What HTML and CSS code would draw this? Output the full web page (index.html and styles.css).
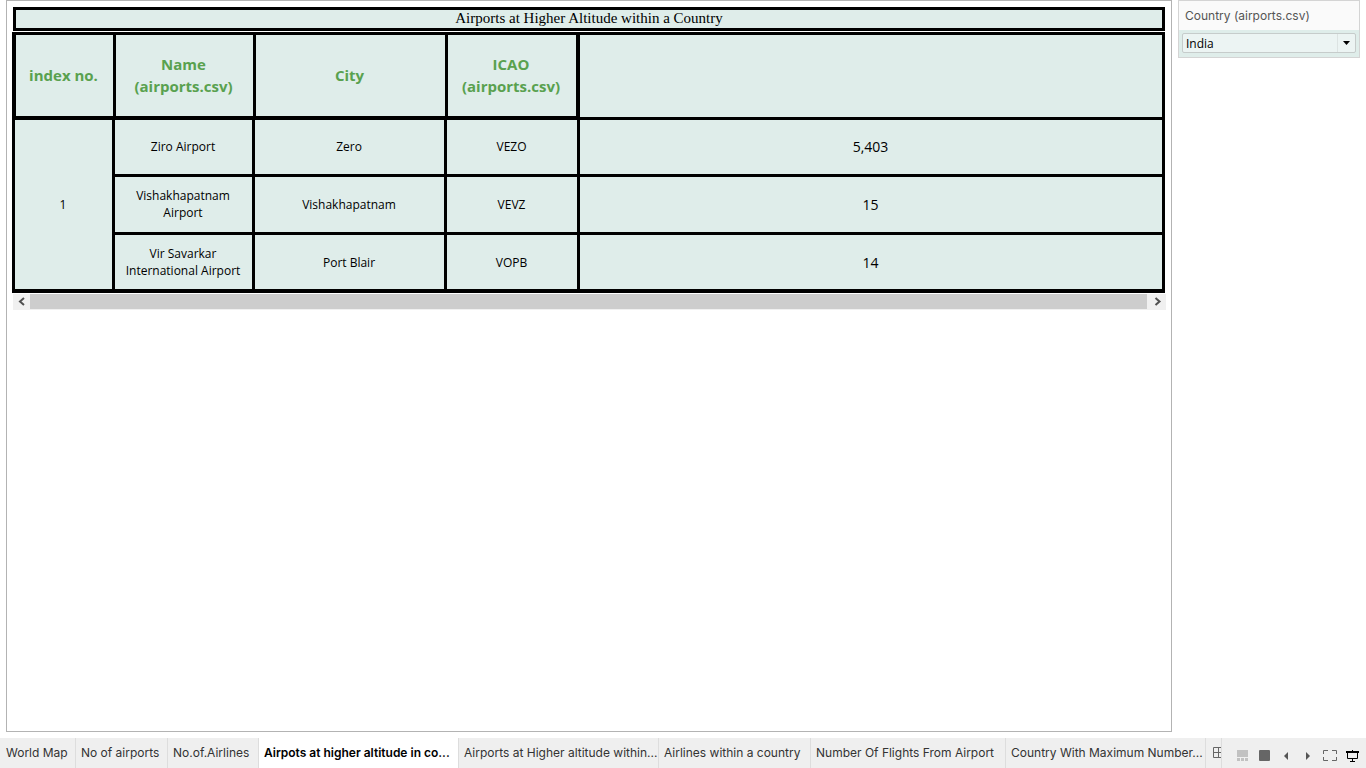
FILE: index.html
```html
<!DOCTYPE html>
<html lang="en">
<head>
<meta charset="utf-8">
<title>Airports at Higher Altitude within a Country</title>
<link rel="stylesheet" href="styles.css">
</head>
<body>
<div class="workbook">
  <div class="stage">
    <main class="sheet">
      <h1 class="sheet-title">Airports at Higher Altitude within a Country</h1>
      <table class="grid">
        <colgroup><col class="col-index"><col class="col-name"><col class="col-city"><col class="col-icao"><col></colgroup>
        <thead>
          <tr><th>index no.</th><th>Name (airports.csv)</th><th>City</th><th>ICAO (airports.csv)</th><th></th></tr>
        </thead>
        <tbody>
          <tr><td rowspan="3" class="index">1</td><td>Ziro Airport</td><td>Zero</td><td>VEZO</td><td class="value">5,403</td></tr>
          <tr><td>Vishakhapatnam Airport</td><td>Vishakhapatnam</td><td>VEVZ</td><td class="value">15</td></tr>
          <tr><td>Vir Savarkar International Airport</td><td>Port Blair</td><td>VOPB</td><td class="value">14</td></tr>
        </tbody>
      </table>
      <div class="scrollbar">
        <button type="button" class="scroll-button" aria-label="Scroll left"><svg width="8" height="9" viewBox="0 0 8 9"><path d="M6 1 2 4.5 6 8" fill="none" stroke="#505050" stroke-width="2"/></svg></button>
        <div class="scroll-thumb"></div>
        <button type="button" class="scroll-button scroll-right" aria-label="Scroll right"><svg width="8" height="9" viewBox="0 0 8 9"><path d="M1.5 1 5.5 4.5 1.5 8" fill="none" stroke="#505050" stroke-width="2"/></svg></button>
      </div>
    </main>
    <aside class="filter">
      <label class="filter-title" for="country">Country (airports.csv)</label>
      <div class="filter-body">
        <div class="dropdown">
          <select id="country"><option>India</option></select>
          <span class="dropdown-arrow"><svg width="7" height="4" viewBox="0 0 7 4"><path d="M0 0h7L3.5 4z"/></svg></span>
        </div>
      </div>
    </aside>
  </div>
  <nav class="tabbar">
    <div class="tabs">
      <a href="#" class="tab tab-map">World Map</a>
      <a href="#" class="tab tab-airports">No of airports</a>
      <a href="#" class="tab tab-airlines">No.of.Airlines</a>
      <a href="#" class="tab tab-long active">Airpots at higher altitude in co...</a>
      <a href="#" class="tab tab-long">Airports at Higher altitude within...</a>
      <a href="#" class="tab tab-within">Airlines within a country</a>
      <a href="#" class="tab tab-flights">Number Of Flights From Airport</a>
      <a href="#" class="tab tab-long">Country With Maximum Number...</a>
      <a href="#" class="tab tab-dashboard" aria-label="Dashboard"><svg width="11" height="11" viewBox="0 0 11 11"><path d="M.5.5h10v10H.5zM5.500 .5v10M.5 5.500h10" fill="none" stroke="#666"/></svg></a>
    </div>
    <div class="tools">
      <button type="button" aria-label="Show filmstrip"><svg width="11" height="11" viewBox="0 0 11 11" fill="#c1c1c1"><path d="M0 0h11v7H0zM0 8h3v3H0zM4 8h3v3H4zM8 8h3v3H8z"/></svg></button>
      <button type="button" aria-label="Show tabs"><svg width="11" height="11" viewBox="0 0 11 11"><rect width="11" height="11" rx="1" fill="#666"/></svg></button>
      <button type="button" aria-label="Previous sheet"><svg width="4" height="8" viewBox="0 0 4 8"><path d="M4 0v8L0 4z" fill="#555"/></svg></button>
      <button type="button" aria-label="Next sheet"><svg width="4" height="8" viewBox="0 0 4 8"><path d="M0 0v8l4-4z" fill="#555"/></svg></button>
      <button type="button" aria-label="Full screen"><svg width="14" height="11" viewBox="0 0 14 11"><path d="M.5 4V.5H5M9 .5h4.500V4M13.500 7v3.500H9M5 10.500H.5V7" fill="none" stroke="#666"/></svg></button>
      <button type="button" aria-label="Presentation mode"><svg width="13" height="12" viewBox="0 0 13 12"><path d="M0 1h13v2H0zM6 0h1v1H6zM6 9h1v2H6zM4 11h5v1H4z"/><path d="M1.500 2.500v6h10v-6" fill="none" stroke="#000"/></svg></button>
    </div>
  </nav>
</div>
</body>
</html>
```
FILE: styles.css
```css
* { box-sizing: border-box; }
body { margin: 0; background: #fff; color: #000; font-family: "Open Sans", sans-serif; font-size: 12px; }
button { border: 0; padding: 0; background: none; }
svg { display: block; }

.workbook { display: flex; flex-direction: column; height: 100vh; }
.stage { flex: 1; display: flex; align-items: flex-start; gap: 6px; padding: 0 6px 6px; min-height: 0; }
.sheet { flex: 1; align-self: stretch; border: 1px solid #b3b3b3; padding: 6px 5px; min-width: 0; }
.sheet-title {
  margin: 0 1px 1px; height: 24px; border: 3px solid #000; background: #dfedea;
  font: 400 15px/17px "Liberation Serif", serif; text-align: center;
}

.grid {
  width: calc(100% - 1px); table-layout: fixed; border-collapse: separate; border-spacing: 0;
  border-top: 3px solid #000; border-left: 3px solid #000; background: #dfedea; text-align: center;
}
.col-index { width: 100px; }
.col-name { width: 140px; }
.col-city { width: 192px; }
.col-icao { width: 133px; }
.grid th {
  height: 85px; padding: 0 10px 2px 8px; border: 0 solid #000; border-width: 0 2px 4px 1px;
  color: #59a14f; font-size: 15px; line-height: 22px; font-weight: 700;
}
.grid th:nth-child(4) { border-right-width: 4px; }
.grid th:last-child { border-width: 0 3px 3px 0; }
.grid td { height: 58px; padding: 0 5px 1px 4px; border: 0 solid #000; border-width: 0 3px 3px 0; line-height: 17px; }
.grid tbody tr:first-child td { height: 57px; }
.grid tbody tr:last-child td, .grid .index { border-bottom-width: 4px; padding-bottom: 0; }
.grid .value { font-size: 14px; }

.scrollbar { display: flex; height: 16px; margin: 1px 0 0 1px; background: #f0f0f0; }
.scroll-button { width: 17px; height: 15px; display: flex; align-items: center; justify-content: center; }
.scroll-right { width: 19px; padding-left: 3px; }
.scroll-thumb { flex: 1; height: 15px; background: #cdcdcd; }

.filter { width: 182px; border: 1px solid #d4d4d4; background: #dfedea; }
.filter-title { display: block; height: 29px; padding: 0 6px; background: #fafafa; color: #555; font: 12px/30px Inter, sans-serif; }
.filter-body { padding: 3px; }
.dropdown { display: flex; align-items: center; position: relative; height: 20px; margin-bottom: 1px; border: 1px solid #c6cccb; border-radius: 2px; background: #ecf4f3; }
.dropdown select { appearance: none; flex: 1; height: 18px; border: 0; padding: 0 3px; background: none; color: #000; font: 12px "Open Sans", sans-serif; }
.dropdown-arrow { position: absolute; right: 0; top: 0; width: 18px; height: 18px; border-left: 1px solid #dce3e2; display: grid; place-items: center; pointer-events: none; }

.tabbar { display: flex; height: 30px; background: #efefef; font-family: Inter, sans-serif; }
.tabs { flex: 1; display: flex; min-width: 0; overflow: hidden; }
.tab { flex: none; padding: 0 5px; border-right: 1px solid #ddd; color: #333; line-height: 30px; text-decoration: none; white-space: nowrap; }
.tab:first-child { padding-left: 6px; }
.active { background: #fff; color: #000; font-weight: 600; }
.tab-map { width: 76px; }
.tab-airports { width: 92px; }
.tab-airlines { width: 91px; }
.tab-long { width: 200px; }
.tab-within { width: 152px; }
.tab-flights { width: 195px; }
.tab-dashboard { width: 40px; padding: 9px 7px; }
.tools { display: flex; align-items: center; width: 145px; padding-top: 5px; border-left: 1px solid #ddd; padding-left: 9px; }
.tools button { width: 22px; height: 22px; display: grid; place-items: center; }
```
